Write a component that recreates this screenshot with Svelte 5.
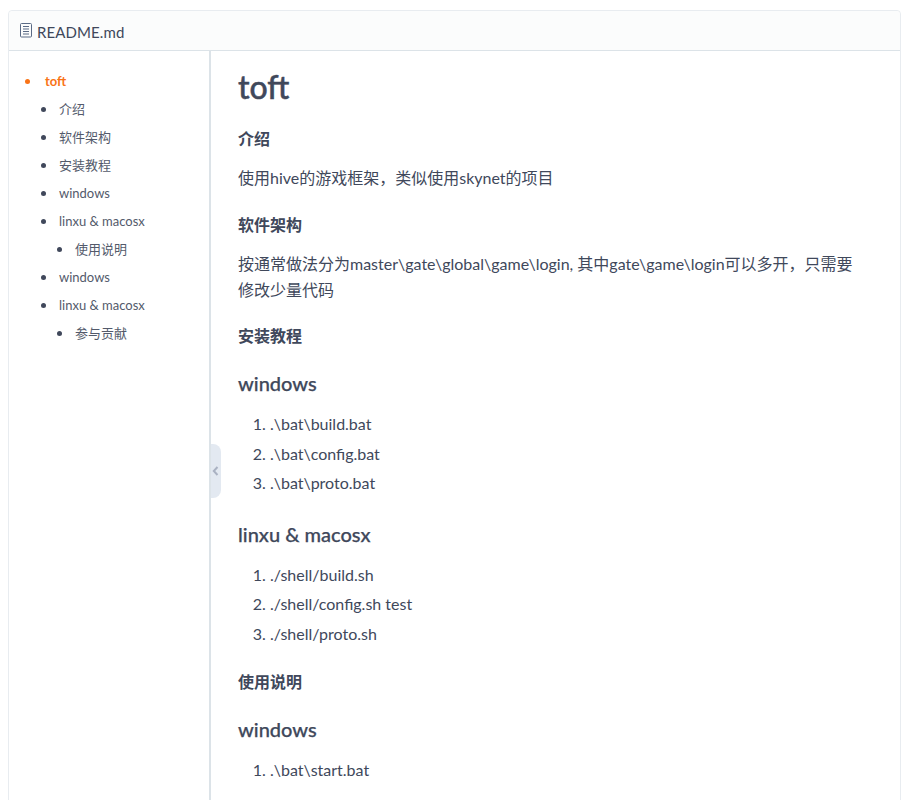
<script>
  const toc = [
    { t: '介绍', l: 1 }, { t: '软件架构', l: 1 }, { t: '安装教程', l: 1 }, { t: 'windows', l: 1 },
    { t: 'linxu & macosx', l: 1 }, { t: '使用说明', l: 2 }, { t: 'windows', l: 1 },
    { t: 'linxu & macosx', l: 1 }, { t: '参与贡献', l: 2 }
  ];
</script>

<div class="card">
  <header class="head">
    <svg class="file" width="14" height="15" viewBox="0 0 14 15" fill="none">
      <rect x="1.5" y="0.5" width="11" height="13.5" rx="1" stroke="#5a6a85" />
      <path d="M4 3.5h6M4 6h6M4 8.5h6M4 11h6" stroke="#5a6a85" />
    </svg>
    <span>README.md</span>
  </header>
  <div class="body">
    <aside class="side">
      <ul class="toc">
        <li class="active"><span class="dot"></span>toft</li>
        {#each toc as item}
          <li class={item.l === 2 ? 'lv2' : 'lv1'}><span class="dot"></span>{item.t}</li>
        {/each}
      </ul>
      <button class="toggle" aria-label="收起">
        <svg width="7" height="10" viewBox="0 0 7 10" fill="none"><path d="M5.5 1 L1.8 5 L5.5 9" stroke="#aab2c2" stroke-width="2" /></svg>
      </button>
    </aside>
    <main class="md">
      <h1>toft</h1>
      <h3>介绍</h3>
      <p>使用hive的游戏框架，类似使用skynet的项目</p>
      <h3>软件架构</h3>
      <p>按通常做法分为master\gate\global\game\login, 其中gate\game\login可以多开，只需要修改少量代码</p>
      <h3>安装教程</h3>
      <h4>windows</h4>
      <ol><li>.\bat\build.bat</li><li>.\bat\config.bat</li><li>.\bat\proto.bat</li></ol>
      <h4>linxu &amp; macosx</h4>
      <ol><li>./shell/build.sh</li><li>./shell/config.sh test</li><li>./shell/proto.sh</li></ol>
      <h3>使用说明</h3>
      <h4>windows</h4>
      <ol><li>.\bat\start.bat</li></ol>
    </main>
  </div>
</div>

<style>
  :global(body) {
    margin: 0;
    height: 800px;
    overflow: hidden;
    background: #fff;
    font-family: Lato, "Noto Sans CJK SC", sans-serif;
    color: #40485b;
  }
  .card {
    margin: 10px 10px 0 8px;
    border: 1px solid #e8ecf0;
    border-radius: 4px;
    height: 1000px;
    display: flex;
    flex-direction: column;
  }
  .head {
    height: 39px;
    flex: none;
    background: #fbfcfc;
    border-bottom: 1px solid #dce3e8;
    display: flex;
    align-items: center;
    gap: 4px;
    padding-left: 10px;
    font-size: 15px;
    letter-spacing: 0.1px;
    color: #40485b;
    border-radius: 4px 4px 0 0;
  }
  .head span { position: relative; top: 1px; }
  .body { display: flex; flex: 1; }
  .side {
    width: 200px;
    flex: none;
    border-right: 2px solid #dce3e8;
    position: relative;
    padding-top: 16px;
  }
  .toc { list-style: none; margin: 0; padding: 0; font-size: 13px; }
  .toc li { height: 28px; line-height: 28px; position: relative; color: #535a6b; }
  .dot { position: absolute; width: 5px; height: 5px; border-radius: 50%; background: #40485b; top: 12px; }
  .active { padding-left: 36px; color: #f97316 !important; font-weight: 700; }
  .active .dot { background: #f97316; left: 16px; }
  .lv1 { padding-left: 50px; }
  .lv1 .dot { left: 32px; }
  .lv2 { padding-left: 66px; }
  .lv2 .dot { left: 48px; }
  .toggle {
    position: absolute;
    right: -12px;
    top: 393px;
    width: 10px;
    height: 54px;
    padding: 0 0 0 1px;
    border: 0;
    background: #e3e9f1;
    border-radius: 0 8px 8px 0;
    display: flex;
    align-items: center;
    justify-content: flex-start;
  }
  .md { flex: 1; padding: 0 40px 0 27px; font-size: 16px; line-height: 26px; }
  h1 { font-size: 32px; font-weight: 500; line-height: 40px; margin: 16px 0 0; -webkit-text-stroke: 0.5px currentColor; }
  h3 { font-size: 16px; font-weight: 700; line-height: 24px; margin: 22px 0 0; }
  h1 + h3 { margin-top: 20px; }
  h4 { font-size: 20px; font-weight: 500; line-height: 28px; margin: 22px 0 0; -webkit-text-stroke: 0.25px currentColor; }
  h3 + h4 { margin-top: 21px; }
  p { margin: 14px 0 0; }
  p + h3 { margin-top: 21px; }
  h1 + h3 + p + h3 { margin-top: 22px; }
  ol { margin: 12px 0 0; padding-left: 32px; }
  ol li { line-height: 29.5px; }
</style>
